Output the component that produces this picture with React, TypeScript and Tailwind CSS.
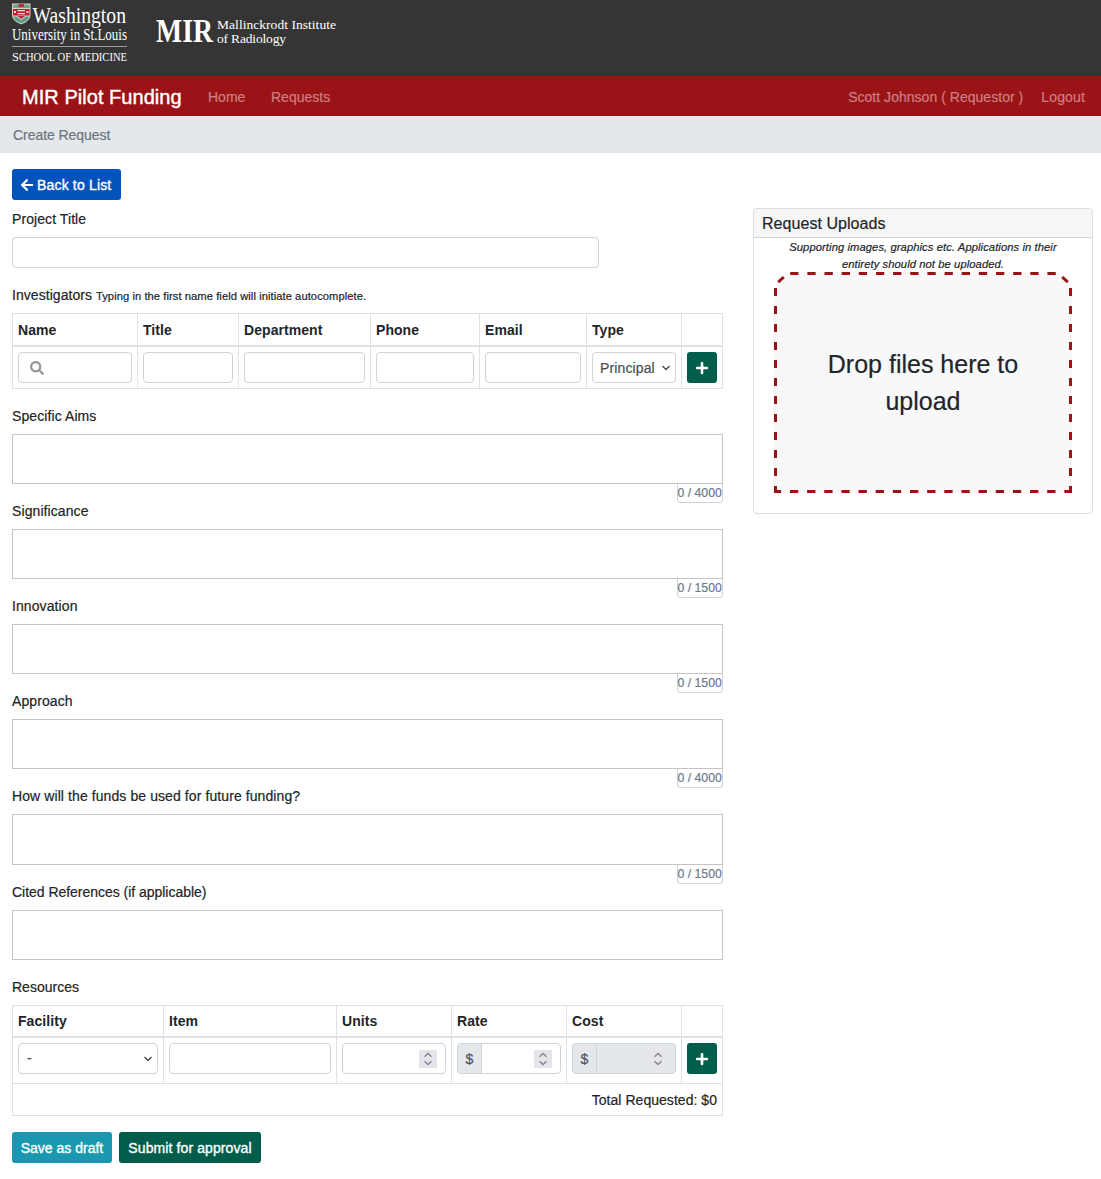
import React from "react";
import { FaArrowLeft, FaPlus, FaSearch } from "react-icons/fa";

const line = "border-[#dee2e6]";
const box = "h-[31px] w-full rounded border border-[#ced4da] bg-white";

function Logo() {
  return (
    <svg width="340" height="76" viewBox="0 0 340 76" fill="#fff" fontFamily="'Liberation Serif', serif">
      <path d="M12 3.500h18.500v11c0 5-4 8-9.200 9.800c-5.300-1.800-9.300-4.800-9.300-9.800z" fill="#ddd3b8" />
      <path d="M13 4.500h16.500v3.500h-16.500z" fill="#6fa394" />
      <path d="M18.500 4h5.500v3h-5.500z" fill="#c1273b" />
      <path d="M13 9h16.500v6.500h-16.500z" fill="#b81e35" />
      <path d="M17.500 10h7.500v1.200h-7.500zM17.500 13h7.500v1.200h-7.500zM14 11h2v2h-2zM26.500 11h2v2h-2z" fill="#f2dfcf" />
      <path d="M13.200 16.500h3.300l4.700 3.500l4.700-3.500h3.400c-.8 3.500-4 5.300-8.100 6.700c-4-1.400-7.200-3.200-8-6.700z" fill="#5f9c8c" />
      <path d="M17.500 16h7.500l-3.800 3z" fill="#c1273b" />
      <text x="32.500" y="22.500" fontSize="23" textLength="93.500" lengthAdjust="spacingAndGlyphs">Washington</text>
      <text x="12" y="40" fontSize="17" textLength="115" lengthAdjust="spacingAndGlyphs">University in St.Louis</text>
      <path d="M12 46h115v1h-115z" fill="#999" />
      <text x="12" y="61" fontSize="13.500" textLength="115" lengthAdjust="spacingAndGlyphs">S<tspan fontSize="11.500">CHOOL OF </tspan>M<tspan fontSize="11.500">EDICINE</tspan></text>
      <text x="156" y="42" fontSize="34" fontWeight="bold" textLength="57" lengthAdjust="spacingAndGlyphs">MIR</text>
      <text x="217" y="28.500" fontSize="13.500" textLength="119" lengthAdjust="spacing">Mallinckrodt Institute</text>
      <text x="217" y="42.500" fontSize="13.500" textLength="69" lengthAdjust="spacing">of Radiology</text>
    </svg>
  );
}

function Chevron() {
  return (
    <svg width="10" height="6" viewBox="0 0 10 6" fill="none" stroke="#3f454b" strokeWidth="1.300">
      <path d="M1.500 1L5 4.500L8.500 1" />
    </svg>
  );
}

function Spinner({ muted = false }: { muted?: boolean }) {
  return (
    <span className={`flex h-[18px] w-[18px] items-center justify-center ${muted ? "bg-[#e6e5ea]" : "bg-[#e6e4ea]"}`}>
      <svg width="10" height="14" viewBox="0 0 10 14" fill="none" stroke="#85838d" strokeWidth="1.300">
        <path d="M1.500 4.800L5 1.500L8.500 4.800M1.500 9.200L5 12.500L8.500 9.200" />
      </svg>
    </span>
  );
}

function AddButton() {
  return (
    <button className="flex h-[31px] w-[30px] items-center justify-center rounded-[3px] bg-[#025d4b] pr-px text-white">
      <FaPlus size={14} />
    </button>
  );
}

function Head({ labels, cols, size }: { labels: string[]; cols: string; size: string }) {
  return (
    <div className={`grid border-t border-b-2 border-r ${size} ${line} ${cols}`}>
      {labels.map((label, i) => (
        <div key={i} className={`flex items-end border-l pb-1 pl-[5px] font-bold tracking-[0.060px] [-webkit-text-stroke:0px] ${line}`}>{label}</div>
      ))}
    </div>
  );
}

function Cell({ children }: { children?: React.ReactNode }) {
  return <div className={`border-l px-[5px] pt-[5px] ${line}`}>{children}</div>;
}

function Field({ label, limit, tall = false }: { label: string; limit?: number; tall?: boolean }) {
  return (
    <div className={tall ? "h-24" : "h-[95px]"}>
      <div className={`h-7 ${limit ? "tracking-[0.090px]" : "tracking-[-0.030px]"}`}>{label}</div>
      <textarea className={`block w-full resize-none border border-[#c4c4c4] ${tall ? "h-[51px]" : "h-[50px]"}`} />
      {limit && (
        <div className="ml-auto h-[19px] w-[46px] whitespace-nowrap rounded-b-[4px] border border-t-0 border-[#ced4da] text-[12.250px] leading-[18px] text-[#6c7a89]">
          <span className="-ml-[0.500px]">0 / {limit}</span>
        </div>
      )}
    </div>
  );
}

const peopleCols = "grid-cols-[125px_101px_132px_109px_107px_95px_1fr]";
const resourceCols = "grid-cols-[151px_173px_115px_115px_115px_1fr]";

export default function App() {
  return (
    <div className="min-h-[1179px] bg-white font-['Liberation_Sans',sans-serif] text-[14px] leading-[21px] text-[#212529] [-webkit-text-stroke:0.200px]">
      <header className="h-[76px] bg-[#353535]"><Logo /></header>
      <nav className="flex h-10 items-center bg-[#9a1417] pl-[22px] pr-4 pt-[2px] text-[#cf7f81]">
        <span className="w-[186px] text-[20px] tracking-[0.040px] text-white [-webkit-text-stroke:0.400px]">MIR Pilot Funding</span>
        <span className="w-[63px]">Home</span>
        <span>Requests</span>
        <span className="ml-auto tracking-[0.030px]">Scott Johnson ( Requestor )</span>
        <span className="ml-[18px] tracking-[0.150px]">Logout</span>
      </nav>
      <div className="h-[37px] bg-[#e4e8eb] pl-[13px] pt-[9px] tracking-[-0.050px] text-[#6c757d]">Create Request</div>

      <main className="flex justify-between pl-3 pr-2 pt-4">
        <section className="w-[711px]">
          <button className="flex h-[31px] w-[109px] items-center gap-[3px] rounded-[3px] bg-[#0353bd] pl-2 pt-px text-white">
            <FaArrowLeft size={14} />
            <span className="whitespace-nowrap tracking-[0.170px] [-webkit-text-stroke:0.350px]">Back to List</span>
          </button>
          <div className="mt-[9px] h-7 tracking-[0.080px]">Project Title</div>
          <input className="block h-[31px] w-[587px] rounded border border-[#ced4da]" />
          <div className="mt-[17px] h-7">
            <span className="tracking-[0.050px]">Investigators</span> <span className="text-[11.200px] tracking-[0.060px]">Typing in the first name field will initiate autocomplete.</span>
          </div>
          <Head size="h-[34px]" cols={peopleCols} labels={["Name", "Title", "Department", "Phone", "Email", "Type", ""]} />
          <div className={`grid h-[42px] border-b border-r ${line} ${peopleCols}`}>
            <Cell>
              <div className={`flex items-center pl-[11px] text-[#999] ${box}`}><FaSearch size={14} /></div>
            </Cell>
            <Cell><input className={box} /></Cell>
            <Cell><input className={box} /></Cell>
            <Cell><input className={box} /></Cell>
            <Cell><input className={box} /></Cell>
            <Cell>
              <div className={`flex items-center justify-between pl-[7px] pr-1 pt-px text-[#495057] ${box}`}><span className="tracking-[0.120px]">Principal</span> <Chevron /></div>
            </Cell>
            <Cell><AddButton /></Cell>
          </div>

          <div className="mt-[17px]">
            <Field label="Specific Aims" limit={4000} />
            <Field label="Significance" limit={1500} />
            <Field label="Innovation" limit={1500} />
            <Field label="Approach" limit={4000} />
            <Field tall label="How will the funds be used for future funding?" limit={1500} />
            <Field label="Cited References (if applicable)" />
          </div>

          <div className="h-7">Resources</div>
          <Head size="h-[33px]" cols={resourceCols} labels={["Facility", "Item", "Units", "Rate", "Cost", ""]} />
          <div className={`grid h-[45px] border-r ${line} ${resourceCols}`}>
            <Cell>
              <div className={`flex items-center justify-between pl-[8px] pr-1 text-[#495057] ${box}`}>- <Chevron /></div>
            </Cell>
            <Cell><input className={box} /></Cell>
            <Cell>
              <div className={`flex items-center justify-end pr-2 ${box}`}><Spinner /></div>
            </Cell>
            <Cell>
              <div className={`flex items-center overflow-hidden ${box}`}>
                <span className="flex h-full w-6 items-center justify-center border-r border-[#ced4da] bg-[#e4e8eb] pt-px text-[#495057]">$</span>
                <span className="ml-auto mr-2"><Spinner /></span>
              </div>
            </Cell>
            <Cell>
              <div className="flex h-[31px] w-full items-center rounded border border-[#ced4da] bg-[#e4e8eb]">
                <span className="flex h-full w-6 items-center justify-center border-r border-[#ced4da] pt-px text-[#495057]">$</span>
                <span className="ml-auto mr-2"><Spinner muted /></span>
              </div>
            </Cell>
            <Cell><AddButton /></Cell>
          </div>
          <div className={`h-[33px] border pr-[5px] pt-[6px] text-right tracking-[0.040px] ${line}`}>Total Requested: $0</div>
          <div className="mt-4 flex gap-[7px] text-white [-webkit-text-stroke:0.350px]">
            <button className="h-[31px] w-[100px] whitespace-nowrap rounded-[3px] bg-[#1a98b0] pt-px">Save as draft</button>
            <button className="h-[31px] w-[142px] whitespace-nowrap rounded-[3px] bg-[#025d4b] pt-px tracking-[0.100px]">Submit for approval</button>
          </div>
        </section>

        <aside className="mt-[39px] h-[306px] w-[340px] rounded border border-[#dcdcdc]">
          <div className="h-[29px] rounded-t-[3px] border-b border-[#d6d6d6] bg-[#f6f6f6] pl-2 pt-1 text-[16px] tracking-[0.050px]">Request Uploads</div>
          <p className="px-5 pt-px text-center text-[11.200px] italic leading-[17px] tracking-[0.090px]">
            Supporting images, graphics etc. Applications in their entirety should not be uploaded.
          </p>
          <div className="relative mx-5 -mt-px h-[221px] rounded-t-[20px] bg-[#f8f8f8] pt-[74px] text-center text-[25px] leading-[37px]">
            <svg className="absolute left-0 top-0" width="298" height="221" viewBox="0 0 298 221" fill="none" stroke="#9a1417" strokeWidth="3">
              <path d="M16.200 1.500H283" strokeDasharray="8.300 8.850" />
              <path d="M1.500 16V221M296.500 16V221" strokeDasharray="8 10" />
              <path d="M-1.200 219.500H298" strokeDasharray="8.300 8.850" />
              <path d="M4.200 10.200L9.800 5M293.800 10.200L288.200 5" />
            </svg>
            Drop files here to<br />upload
          </div>
        </aside>
      </main>
    </div>
  );
}
